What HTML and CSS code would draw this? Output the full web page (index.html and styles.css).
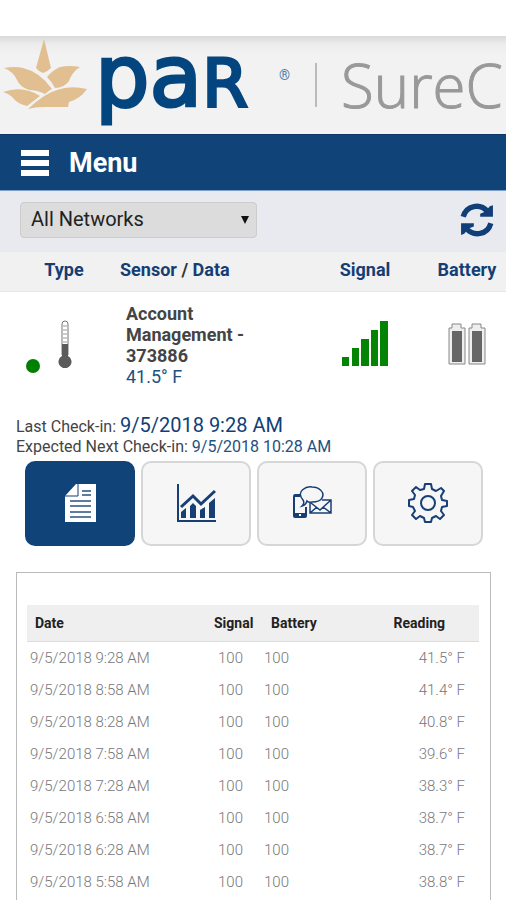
FILE: index.html
```html
<!DOCTYPE html>
<html lang="en">
<head>
<meta charset="utf-8">
<meta name="viewport" content="width=device-width, initial-scale=1">
<title>Sensors</title>
<link rel="stylesheet" href="styles.css">
</head>
<body>
<header class="brand">
  <svg class="brand-mark" viewBox="0 0 86 72" aria-hidden="true">
    <path d="M41 0L48 29Q44 33 40 34Q36 33 33 29Z"/>
    <path d="M1 29Q12 27 20 29Q37 33 49 50Q45 52 42 55Q34 51 26 51Q17 48 14 41Q11 33 1 29Z"/>
    <path d="M77 28Q66 26 57 28Q50 31 44 38Q49 43 52 49Q61 49 66 42Q69 33 77 28Z"/>
    <path d="M0 53Q20 46 37 57L24 67Q15 65 11 60Q7 55 0 53Z"/>
    <path d="M84 50Q67 46 54 51Q42 54 25 70Q32 68 40 68H65L66 63Q77 60 84 50Z"/>
  </svg>
  <span class="brand-name">pa<span class="brand-cap">R</span></span>
  <sup class="brand-reg">®</sup>
  <span class="brand-rule"></span>
  <span class="brand-product">SureC</span>
</header>
<nav class="nav">
  <button class="menu" type="button">
    <svg class="menu-icon" viewBox="0 0 28 26" aria-hidden="true"><path d="M0 0h28v6H0zM0 10h28v6H0zM0 20h28v6H0z"/></svg>
    <span>Menu</span>
  </button>
</nav>
<main>
  <div class="toolbar">
    <div class="network">
      <select class="network-select" aria-label="Network"><option>All Networks</option></select>
      <span class="network-arrow" aria-hidden="true"></span>
    </div>
    <button class="refresh" type="button" aria-label="Refresh">
      <svg viewBox="0 0 32 32" aria-hidden="true">
        <path class="arc" d="M3 13C6 2 19 0 26 8M29 19C26 30 13 32 6 24"/>
        <path d="M31 2V13H19V10L24 8L28 3ZM1 30V19H13V22L8 24L4 29Z"/>
      </svg>
    </button>
  </div>
  <div class="columns grid">
    <span class="center"><a href="#">Type</a></span>
    <span class="heading-data"><a href="#">Sensor</a> / <a href="#">Data</a></span>
    <a class="center" href="#">Signal</a>
    <a class="center" href="#">Battery</a>
  </div>
  <section class="sensor grid">
    <div class="kind">
      <span class="status"></span>
      <svg class="thermometer" viewBox="0 0 14 48" aria-hidden="true">
        <path class="tube" d="M4 35V4Q4 1 7 1Q10 1 10 4V35"/>
        <path class="ticks" d="M5 6h4M5 10h4M5 14h4M5 18h4M5 22h4"/>
        <path d="M4 24h6v12a6.5 6.5 0 1 1-6 0Z"/>
      </svg>
    </div>
    <div class="detail">
      <strong>Account Management - 373886</strong>
      <span class="value">41.5° F</span>
    </div>
    <svg class="signal" viewBox="0 0 46 45" aria-hidden="true"><path d="M0 36h7v9H0zM10 27h7v18h-7zM19 18h8v27h-8zM29 9h7v36h-7zM38 0h8v45h-8z"/></svg>
    <svg class="battery" viewBox="0 0 38 42" aria-hidden="true">
      <g id="cell"><path class="case" d="M1 5H4V1H13V5H17V41H1Z"/><path class="charge" d="M4 8h10v31H4z"/></g>
      <use href="#cell" x="20"/>
    </svg>
  </section>
  <section class="checkin">
    <p>Last Check-in: <span class="last">9/5/2018 9:28 AM</span></p>
    <p>Expected Next Check-in: <span class="value">9/5/2018 10:28 AM</span></p>
  </section>
  <div class="tabs">
    <button class="tab active" type="button" aria-label="History">
      <svg viewBox="0 0 40 40" aria-hidden="true"><path class="page" d="M16 1H36V39H5V13Z"/><path class="fold" d="M18 1V13H5"/><path class="lines" d="M22 8h9M22 12h9M10 18h21M10 23h21M10 29h21M10 34h21"/></svg>
    </button>
    <button class="tab" type="button" aria-label="Chart">
      <svg viewBox="0 0 40 40" aria-hidden="true"><path class="axis" d="M2 1V38H40"/><path class="trend" d="M5 24L17 13L25 21L39 8"/><path class="bars" d="M5 29L10 25V35H5ZM14 23L17 20L20 23V35H14ZM24 27L29 24V35H24ZM33 20L39 15V35H33Z"/></svg>
    </button>
    <button class="tab" type="button" aria-label="Notifications">
      <svg viewBox="0 0 40 40" aria-hidden="true"><path class="phone" d="M8 12H3Q2 12 2 14V33Q2 34 3 34H13Q14 34 14 33V24"/><path class="phone-end" d="M2 30h12v4H2zM3 11h5v3H3z"/><path class="phone-key" d="M7 32h2"/><path class="line" d="M15 18Q14 22 10 23Q13 20 11 17C3 8 15 3 20 4C28 4 33 10 30 15Q28 19 20 19Q17 20 15 18ZM30 17H39V30H18V20M19 20L28 27L39 17M18 30L25 24M31 24L39 30"/></svg>
    </button>
    <button class="tab" type="button" aria-label="Settings">
      <svg viewBox="0 0 40 40" aria-hidden="true"><path class="gear" d="M17 1H23L24 6L28 8L33 5L36 8L33 13L34 17L39 18V23L34 24L33 28L36 32L32 36L28 33L24 35L23 39H17L16 35L12 33L8 36L4 32L7 28L5 24L1 23V17L6 16L7 12L4 8L8 4L12 7L16 6Z"/><circle class="gear" cx="20" cy="20" r="7"/></svg>
    </button>
  </div>
  <section class="panel">
    <table class="readings">
      <thead><tr><th class="date">Date</th><th class="sig">Signal</th><th class="bat">Battery</th><th class="reading">Reading</th></tr></thead>
      <tbody>
        <tr><td>9/5/2018 9:28 AM</td><td>100</td><td>100</td><td>41.5° F</td></tr>
        <tr><td>9/5/2018 8:58 AM</td><td>100</td><td>100</td><td>41.4° F</td></tr>
        <tr><td>9/5/2018 8:28 AM</td><td>100</td><td>100</td><td>40.8° F</td></tr>
        <tr><td>9/5/2018 7:58 AM</td><td>100</td><td>100</td><td>39.6° F</td></tr>
        <tr><td>9/5/2018 7:28 AM</td><td>100</td><td>100</td><td>38.3° F</td></tr>
        <tr><td>9/5/2018 6:58 AM</td><td>100</td><td>100</td><td>38.7° F</td></tr>
        <tr><td>9/5/2018 6:28 AM</td><td>100</td><td>100</td><td>38.7° F</td></tr>
        <tr><td>9/5/2018 5:58 AM</td><td>100</td><td>100</td><td>38.8° F</td></tr>
      </tbody>
    </table>
  </section>
</main>
</body>
</html>
```
FILE: styles.css
```css
* { box-sizing: border-box; }
html { scrollbar-width: none; }
body { margin: 0; padding-top: 36px; background: #fff; color: #444; font-family: Roboto, sans-serif; font-size: 16px; }
button { border: 0; padding: 0; background: none; font: inherit; color: inherit; }
a { color: #153e75; text-decoration: none; }
svg { display: block; }

.brand { display: flex; align-items: center; height: 98px; padding-left: 3px; white-space: nowrap; background: linear-gradient(#d9d9d9, #ececec 8px, #f2f2f2 20px); }
.brand-mark { flex: none; width: 86px; height: 72px; margin-bottom: 20px; fill: #e2bf91; }
.brand-name { flex: none; width: 190px; padding: 0 0 10px 6px; color: #03457f; font-family: "DejaVu Sans", sans-serif; font-size: 86px; line-height: 96px; -webkit-text-stroke: 3px #03457f; }
.brand-cap { font-size: 66px; }
.brand-reg { flex: none; width: 36px; margin-bottom: 20px; color: #4e7ba7; font-size: 14px; line-height: 16px; }
.brand-rule { flex: none; width: 2px; height: 44px; margin-right: 24px; background: #bbb; }
.brand-product { color: #999; font-family: "Open Sans", sans-serif; font-size: 60px; font-weight: 300; line-height: 72px; -webkit-text-stroke: 1px #999; }

.nav { background: #104479; color: #fff; border-top: 1px solid #0a3768; }
.menu { display: flex; align-items: center; gap: 20px; height: 55px; padding-left: 21px; font-size: 27px; font-weight: 700; }
.menu-icon { width: 28px; height: 26px; fill: #fff; }

.toolbar { display: flex; justify-content: space-between; align-items: center; height: 62px; padding: 0 12px 4px 20px; border-top: 1px solid #7f9fcb; background: #e9eaef; }
.network { position: relative; width: 237px; }
.network-select { appearance: none; width: 100%; height: 36px; padding: 0 10px 2px; border: 1px solid #ccc; border-radius: 4px; background: #dcdcdc; color: #222; font: 20px Roboto, sans-serif; }
.network-arrow { position: absolute; right: 8px; top: 14px; border: 4px solid transparent; border-top: 8px solid #111; border-bottom: 0; }
.refresh svg { width: 34px; height: 34px; fill: #103f78; }
.refresh .arc { fill: none; stroke: #103f78; stroke-width: 5; }

.grid { display: grid; grid-template-columns: 120px 1fr 126px 78px; }
.columns { align-items: center; height: 40px; padding-bottom: 4px; border-bottom: 1px solid #e5e5e5; background: #f1f1f1; font-size: 18px; font-weight: 700; color: #333; }
.center { text-align: center; }
.columns .center:first-child { padding-left: 8px; }
.sensor { height: 120px; }
.kind { display: flex; gap: 18px; padding: 28px 0 0 26px; }
.status { width: 14px; height: 14px; margin-top: 39px; border-radius: 50%; background: #008000; }
.thermometer { width: 14px; height: 48px; fill: #5b5b5b; }
.tube { fill: #fff; stroke: #777; stroke-width: 1; }
.ticks { stroke: #999; }
.detail { display: flex; flex-direction: column; width: 150px; padding: 11px 0 0 6px; font-size: 18px; line-height: 21px; }
.value { color: #24507d; }
.signal { width: 46px; height: 45px; margin: 29px auto 0; fill: #048404; }
.battery { width: 38px; height: 42px; margin: 31px auto 0; }
.case { fill: #eee; stroke: #888; }
.charge { fill: #666; }

.checkin { padding: 3px 16px 4px; line-height: 20px; }
.checkin p { margin: 0; }
.checkin .last { color: #103f78; font-size: 20px; }

.tabs { display: grid; grid-template-columns: repeat(4, 1fr); gap: 6px; padding: 0 23px 0 25px; }
.tab { display: grid; place-items: center; height: 85px; padding-bottom: 2px; border: 2px solid #d6d6d6; border-radius: 10px; background: #f6f6f6; }
.tab.active { border-color: #104479; background: #104479; }
.tab svg { width: 40px; height: 40px; fill: none; stroke: #173f75; }
.tab .page { fill: #fff; stroke: none; }
.tab .fold { stroke-width: 1; }
.tab .lines { stroke: #5e7d9e; stroke-width: 2; }
.tab .axis { stroke-width: 2; }
.tab .trend { stroke-width: 3; }
.tab .bars, .tab .phone-end { fill: #173f75; stroke: none; }
.tab .phone { stroke-width: 2; }
.tab .phone-key { stroke: #fff; stroke-width: 2; }
.tab .line { stroke-width: 1.5; }
.tab .gear { stroke-width: 2; stroke-linejoin: round; }

.panel { margin: 26px 15px 0 16px; padding: 32px 11px 16px 10px; border: 1px solid #bbb; }
.readings { width: 100%; table-layout: fixed; border-collapse: separate; border-spacing: 0; font-size: 15px; }
.readings th { height: 37px; padding: 0; border-bottom: 1px solid #ddd; background: #efefef; color: #222; font-size: 14px; font-weight: 700; text-align: left; }
.readings td { height: 32px; padding: 0; color: #777; font-weight: 300; }
.date { width: 180px; }
.sig { width: 57px; }
.bat { width: 90px; }
.readings th:nth-child(1) { padding-left: 8px; }
.readings td:nth-child(1) { padding-left: 3px; }
.readings th:nth-child(2) { padding-left: 7px; }
.readings td:nth-child(2) { padding-left: 11px; }
.readings th:nth-child(3) { padding-left: 7px; }
.readings th:nth-child(4) { padding-right: 34px; text-align: right; }
.readings td:nth-child(4) { padding-right: 14px; text-align: right; }
```
